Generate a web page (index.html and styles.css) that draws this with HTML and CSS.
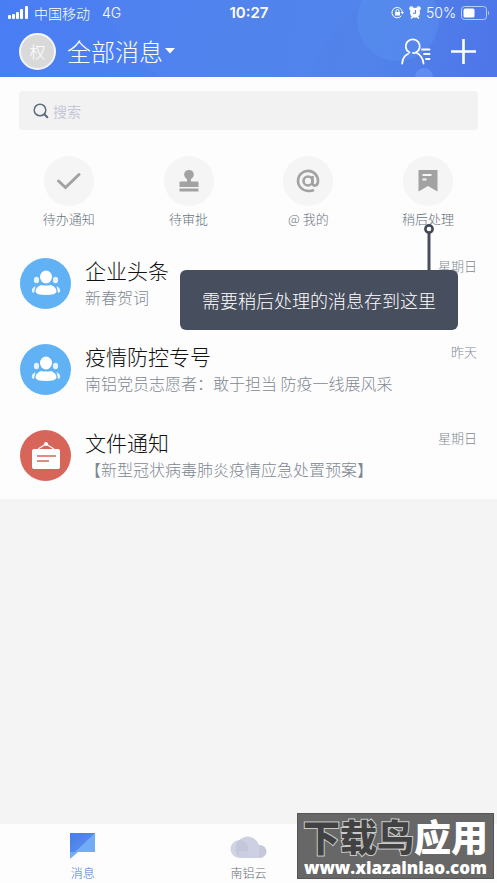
FILE: index.html
```html
<!DOCTYPE html>
<html lang="zh-CN">
<head>
<meta charset="utf-8">
<meta name="viewport" content="width=device-width, initial-scale=1">
<title>全部消息</title>
<link rel="stylesheet" href="styles.css">
</head>
<body>
<header class="header">
  <svg class="header-art" viewBox="0 0 497 77" preserveAspectRatio="none" aria-hidden="true">
    <path d="M106 0 Q112 42 160 77 H310 Q325 35 365 0Z" fill="#5688f0" opacity=".35"/>
    <circle cx="398" cy="20" r="41" fill="#5c92f2" opacity=".45"/>
    <circle cx="424" cy="77" r="9" fill="#6f9df5" opacity=".5"/>
  </svg>
  <div class="status">
    <div class="status-left">
      <svg width="21" height="13" viewBox="0 0 21 13" fill="#fff" aria-hidden="true"><rect x="0" y="9" width="3" height="4" rx="1"/><rect x="4" y="8" width="3" height="5" rx="1"/><rect x="8" y="6" width="3" height="7" rx="1"/><rect x="12" y="3" width="3" height="10" rx="1"/><rect x="17" y="0" width="3" height="13" rx="1"/></svg>
      <span>中国移动</span>
      <span class="network">4G</span>
    </div>
    <span class="clock">10:27</span>
    <div class="status-right">
      <svg width="13" height="13" viewBox="0 0 13 13" fill="none" stroke="#fff" aria-hidden="true"><path d="M10.300 9.800A5.200 5.200 0 1 1 11.300 5.800"/><path d="M9.500 6h3.500l-1.700 2.300z" fill="#fff" stroke="none"/><rect x="4" y="6" width="5" height="3.500" fill="#fff" stroke="none"/><path d="M5 6V5a1.500 1.500 0 0 1 3 0v1"/></svg>
      <svg width="12" height="13" viewBox="0 0 12 13" aria-hidden="true"><circle cx="2.400" cy="2.400" r="2.200" fill="#fff"/><circle cx="9.600" cy="2.400" r="2.200" fill="#fff"/><circle cx="6" cy="6.800" r="5" fill="#fff"/><path d="M2 12.500l2-2M10 12.500l-2-2" stroke="#fff" stroke-width="1.500"/><path d="M6.500 4v3.300H4" fill="none" stroke="#5580ea" stroke-width="1.100"/></svg>
      <span>50%</span>
      <svg width="29" height="14" viewBox="0 0 29 14" aria-hidden="true"><rect x=".5" y=".5" width="25" height="13" rx="3" fill="none" stroke="#b9cbf8"/><rect x="2.500" y="2.500" width="11" height="9" rx="1.500" fill="#fff"/><path d="M27 4.500q2 2.500 0 5z" fill="#b9cbf8"/></svg>
    </div>
  </div>
  <div class="toolbar">
    <span class="me">权</span>
    <button class="title" type="button">全部消息<svg width="10" height="6" viewBox="0 0 10 6" aria-hidden="true"><path d="M0 0h10L5 5.500z" fill="#fff"/></svg></button>
    <button class="tool contacts" type="button" aria-label="通讯录"><svg width="30" height="27" viewBox="0 0 30 27" fill="none" stroke="#fff" stroke-width="1.800" stroke-linecap="round" aria-hidden="true"><path d="M8.500 14.500A7 7 0 1 1 15 14.500Q13 15.500 12 15"/><path d="M1.200 25.500C1.500 20.500 3.500 17.500 7 16M15 14.500C19.500 16.500 22 20 22.500 25.500"/><path d="M21 11.500h7.500M23 16h5.500M25 21h3.500"/></svg></button>
    <button class="tool" type="button" aria-label="添加"><svg width="25" height="25" viewBox="0 0 25 25" aria-hidden="true"><path d="M12.500 0v25M0 12.500h25" stroke="#fff" stroke-width="2.600"/></svg></button>
  </div>
</header>
<main class="main">
  <section class="panel">
    <label class="search">
      <svg width="16" height="16" viewBox="0 0 16 16" fill="none" stroke="#5f6c7d" aria-hidden="true"><circle cx="7" cy="7" r="5.800" stroke-width="1.500"/><path d="M11.300 11.300l3 3" stroke-width="2" stroke-linecap="round"/></svg>
      <input type="search" placeholder="搜索" aria-label="搜索">
    </label>
    <nav class="shortcuts">
      <a class="shortcut" href="#todo"><span class="disc"><svg width="26" height="20" viewBox="0 0 26 20" aria-hidden="true"><path d="M2.500 10l7 6.500L23 3.500" fill="none" stroke="#a2a2a2" stroke-width="3" stroke-linecap="round"/></svg></span>待办通知</a>
      <a class="shortcut" href="#approve"><span class="disc"><svg width="20" height="24" viewBox="0 0 20 24" fill="#a2a2a2" aria-hidden="true"><path d="M8 12.500V10C3.500 7.500 4.500 1 10 1s6.500 6.500 2 9v2.500h6.500q1 0 1 1V18H.5v-4.500q0-1 1-1z"/><rect x=".5" y="19.500" width="19" height="3"/></svg></span>待审批</a>
      <a class="shortcut" href="#mentions"><span class="disc"><svg width="24" height="24" viewBox="0 0 24 24" fill="none" stroke="#a2a2a2" stroke-width="2.600" aria-hidden="true"><circle cx="12" cy="12" r="4.500"/><path d="M18 21Q14.500 22.500 11 21.800A10 10 0 1 1 22 12C22 18 16.500 17.500 16.500 14V7"/></svg></span>@ 我的</a>
      <div class="later">
        <a class="shortcut" href="#later"><span class="disc"><svg width="20" height="22" viewBox="0 0 20 22" aria-hidden="true"><path d="M.5 0h19v21.500L10 16 .5 21.500z" fill="#a2a2a2"/><path d="M4.500 5h9M4.500 9.500h4" stroke="#f5f5f5" stroke-width="2"/></svg></span>稍后处理</a>
        <div class="tip" role="tooltip"><svg class="tip-pin" width="12" height="48" viewBox="0 0 12 48" aria-hidden="true"><path d="M6 9v39" stroke="#474e5d" stroke-width="3"/><circle cx="6" cy="6" r="3.600" fill="#fff" stroke="#414957" stroke-width="2.600"/></svg>需要稍后处理的消息存到这里</div>
      </div>
    </nav>
    <ul class="messages">
      <li class="message">
        <span class="avatar blue"><svg width="30" height="26" viewBox="0 0 30 26" aria-hidden="true"><use href="#people"/></svg></span>
        <div class="body"><h2>企业头条</h2><p>新春贺词</p></div>
        <time>星期日</time>
      </li>
      <li class="message">
        <span class="avatar blue"><svg width="30" height="26" viewBox="0 0 30 26" aria-hidden="true"><g id="people" fill="#fff"><g opacity=".85"><ellipse cx="5.500" cy="10" rx="2.600" ry="3.300"/><ellipse cx="24.500" cy="10" rx="2.600" ry="3.300"/><path d="M4.500 16Q0 18 1 22l2 1zM25.500 16q4.500 2 3.500 6l-2 1z"/></g><ellipse cx="15" cy="7" rx="6" ry="6.500"/><path d="M10 15q5 1 10 0Q25.500 17 25.500 21.500 25 25 15 25T4.500 21.500Q4.500 17 10 15z"/></g></svg></span>
        <div class="body"><h2>疫情防控专号</h2><p>南铝党员志愿者：敢于担当 防疫一线展风采</p></div>
        <time>昨天</time>
      </li>
      <li class="message">
        <span class="avatar red"><svg width="28" height="28" viewBox="0 0 28 28" aria-hidden="true"><path d="M6 8l8-5 8 5" fill="none" stroke="#fff" stroke-width="1.300"/><circle cx="14" cy="3" r="2" fill="#fff"/><rect x="0" y="8" width="28" height="20" rx="2" fill="#fff"/><path d="M5 15h19M5 20h12" stroke="#d7655a" stroke-width="1.400"/></svg></span>
        <div class="body"><h2>文件通知</h2><p>【新型冠状病毒肺炎疫情应急处置预案】</p></div>
        <time>星期日</time>
      </li>
    </ul>
  </section>
</main>
<nav class="tabs">
  <a class="tab active" href="#messages"><svg width="27" height="28" viewBox="0 0 27 28" aria-hidden="true"><defs><linearGradient id="flag" x2="1" y2="1"><stop stop-color="#477be8"/><stop offset="1" stop-color="#5f94f0"/></linearGradient></defs><path d="M1 1h25v19H9l-8 7z" fill="#71adf5"/><path d="M1 1h25L6 20H1z" fill="url(#flag)"/></svg>消息</a>
  <a class="tab" href="#cloud"><svg width="37" height="28" viewBox="0 0 37 28" aria-hidden="true"><circle cx="30" cy="19.500" r="6.500" fill="#c6c9dc"/><path d="M10 26A12 12 0 1 1 29 20q1 6-5 6z" fill="#cdd0e2"/><circle cx="9.500" cy="17" r="9" fill="#bfc4da" opacity=".75"/><path d="M9 19h20v7H9z" fill="#cdd0e2" opacity=".8"/></svg>南铝云</a>
  <a class="tab" href="#apps" aria-label="应用"></a>
  <div class="stamp"><strong><span>下载鸟</span>应用</strong><em>www.xiazainiao.com</em></div>
</nav>
</body>
</html>
```
FILE: styles.css
```css
* { box-sizing: border-box; }
body {
  margin: 0;
  min-height: 100vh;
  display: flex;
  flex-direction: column;
  background: #f4f4f4;
  color: #262626;
  font-family: "Noto Sans CJK SC", "Liberation Sans", sans-serif;
  font-weight: 300;
}
a { color: inherit; text-decoration: none; }
button { border: 0; padding: 0; background: none; color: inherit; font: inherit; }
svg { display: block; flex: none; }
h2, p { margin: 0; font-weight: inherit; }

.header {
  position: relative;
  color: #fff;
  background: linear-gradient(100deg, #497df4, #4f82ec 45%, #5183ea 75%, #4e75e9);
}
.header-art { position: absolute; inset: 0; width: 100%; height: 100%; }
.status {
  position: relative;
  display: grid;
  grid-template-columns: 1fr auto 1fr;
  align-items: center;
  height: 25px;
  padding: 0 7px 0 8px;
  font-size: 14px;
  line-height: 20px;
}
.status-left, .status-right { display: flex; align-items: center; gap: 5px; }
.status-right { justify-content: flex-end; font-family: Inter, sans-serif; }
.network { margin-left: 7px; font-family: Inter, sans-serif; }
.clock { font: 600 15px/20px Inter, sans-serif; }
.toolbar {
  position: relative;
  display: flex;
  align-items: center;
  height: 52px;
  padding: 0 21px 0 19px;
}
.me {
  width: 37px;
  height: 37px;
  border: 2px solid #f3f5fa;
  border-radius: 50%;
  background: #d9d9d9;
  font-size: 16px;
  line-height: 32px;
  text-align: center;
}
.title {
  display: flex;
  align-items: center;
  gap: 2px;
  margin-left: 11px;
  font-size: 24px;
  line-height: 36px;
}
.tool { margin-left: 20px; }
.contacts { margin-left: auto; }

.main { flex: 1; }
.panel { background: #fdfdfd; padding-top: 14px; }
.search {
  display: flex;
  align-items: center;
  gap: 4px;
  height: 39px;
  margin: 0 19px;
  padding: 0 14px;
  border-radius: 4px;
  background: #f2f2f2;
}
.search input {
  flex: 1;
  min-width: 0;
  padding: 0;
  border: 0;
  outline: 0;
  background: none;
  font: 14px/20px "Noto Sans CJK SC", sans-serif;
}
.search input::placeholder { color: #c5c8d8; opacity: 1; }

.shortcuts {
  display: grid;
  grid-template-columns: repeat(4, 1fr);
  padding: 26px 9px 12px;
}
.shortcut {
  display: flex;
  flex-direction: column;
  align-items: center;
  gap: 4px;
  color: #68727e;
  font-size: 13px;
  line-height: 18px;
}
.disc {
  display: grid;
  place-items: center;
  width: 50px;
  height: 50px;
  border-radius: 50%;
  background: #f5f5f5;
}
.later { position: relative; }
.tip {
  position: absolute;
  z-index: 1;
  top: 114px;
  right: 30px;
  padding: 16px 22px;
  border-radius: 6px;
  background: #474e5d;
  color: #fff;
  font-size: 18px;
  line-height: 28px;
  white-space: nowrap;
}
.tip-pin { position: absolute; right: 23px; bottom: 100%; margin-bottom: -1px; }

.messages { margin: 0; padding: 0 0 1px; list-style: none; }
.message { display: flex; align-items: center; gap: 14px; padding: 16px 20px; }
.avatar {
  display: grid;
  place-items: center;
  flex: none;
  width: 51px;
  height: 51px;
  border-radius: 50%;
}
.blue { background: #61b2f5; }
.red { background: #d7655a; }
.body { flex: 1; min-width: 0; }
.body h2 { color: #111; font-size: 21px; line-height: 28px; }
.body p {
  color: #7e8893;
  font-size: 16px;
  line-height: 26px;
  white-space: nowrap;
}
.message time { align-self: flex-start; color: #7e8893; font-size: 13px; line-height: 20px; }

.tabs {
  position: relative;
  display: grid;
  grid-template-columns: repeat(3, 1fr);
  height: 59px;
  padding-top: 8px;
  background: #fdfdfd;
}
.tab {
  display: flex;
  flex-direction: column;
  align-items: center;
  gap: 4px;
  color: #6c7077;
  font-size: 12px;
  line-height: 18px;
}
.active { color: #3f7fd0; }
.stamp {
  position: absolute;
  right: 3px;
  bottom: 4px;
  display: flex;
  flex-direction: column;
  align-items: center;
  width: 197px;
  height: 66px;
  border: 1px solid #555;
  background: #676767;
  color: #fff;
  white-space: nowrap;
}
.stamp strong { font-size: 37px; font-weight: 900; line-height: 44px; }
.stamp strong span {
  color: #424242;
  -webkit-text-stroke: 2px #c9c9c9;
  paint-order: stroke fill;
}
.stamp em { font: 800 17px/20px "Open Sans", sans-serif; }
```
